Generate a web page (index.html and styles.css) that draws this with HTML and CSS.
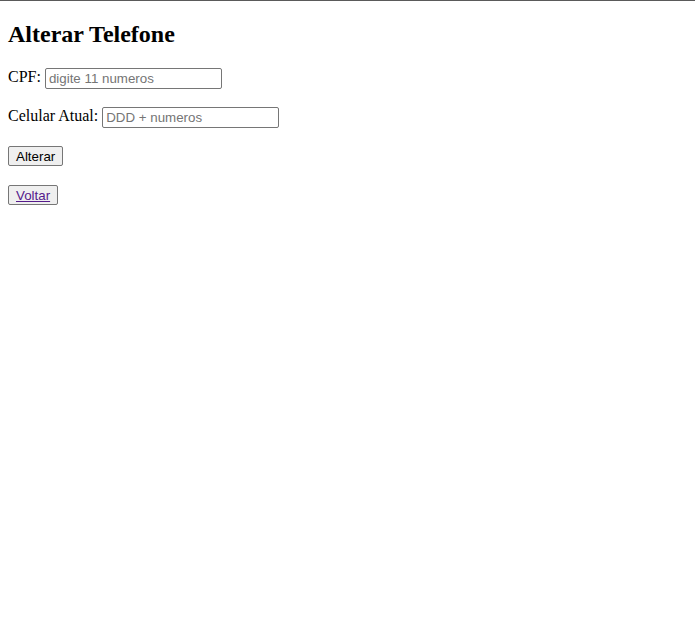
FILE: index.html
```html
<!DOCTYPE html>
<html lang="pt">
<head>
<meta charset="utf-8">
<title>Alterar Telefone</title>
<link rel="stylesheet" href="styles.css">
</head>
<body class="page">
<div class="topline"></div>
<div class="content">
  <h2 class="title">Alterar Telefone</h2>
  <form class="form">
    <p class="row">CPF: <input class="field" type="text" placeholder="digite 11 numeros"></p>
    <p class="row">Celular Atual: <input class="field" type="text" placeholder="DDD + numeros"></p>
    <p class="row"><button class="btn" type="button">Alterar</button></p>
  </form>
  <p class="row"><button class="btn" type="button"><a class="link" href="#">Voltar</a></button></p>
</div>
</body>
</html>
```
FILE: styles.css
```css
.page {
  margin: 0;
  background: #fff;
  color: #000;
  font-family: "Liberation Serif", "Times New Roman", serif;
  font-size: 16px;
}
.topline {
  height: 1px;
  background: #5a5a5a;
}
.content {
  padding: 0 8px;
}
.title {
  font-size: 24px;
  font-weight: bold;
  margin: 19.92px 0 17px;
}
.form {
  margin: 0;
}
.row {
  margin: 16px 0;
  line-height: 23px;
  height: 23px;
}
.field {
  box-sizing: border-box;
  font-family: "Liberation Sans", Arial, sans-serif;
  font-size: 13.333px;
  line-height: normal;
  border: 1px solid #767676;
  border-radius: 2px;
  padding: 1px 3px;
  width: 177px;
  height: 21px;
  vertical-align: middle;
}
.field::placeholder {
  color: #757575;
}
.btn {
  box-sizing: border-box;
  font-family: "Liberation Sans", Arial, sans-serif;
  font-size: 13.333px;
  line-height: normal;
  color: #000;
  background: #efefef;
  border: 1px solid #767676;
  border-radius: 2px;
  padding: 1px 7px;
  height: 20px;
  vertical-align: middle;
}
.link {
  color: #551a8b;
  text-decoration: underline;
}
```
